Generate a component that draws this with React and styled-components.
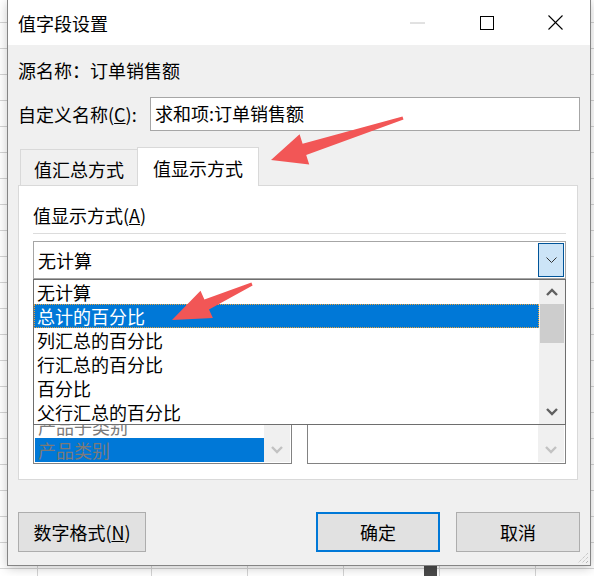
import React from 'react';
import styled, { createGlobalStyle } from 'styled-components';

const FONT = `"Noto Sans CJK SC", "Microsoft YaHei", "Noto Sans", sans-serif`;

const Global = createGlobalStyle`
  html, body { margin: 0; padding: 0; }
  body {
    width: 594px;
    height: 576px;
    overflow: hidden;
    font-family: ${FONT};
    background-color: #ffffff;
    background-image:
      linear-gradient(#4a4a4a, #4a4a4a),
      repeating-linear-gradient(to right, transparent 0, transparent 95px, #d4d4d4 95px, #d4d4d4 96px),
      repeating-linear-gradient(to bottom, transparent 0, transparent 25px, #d4d4d4 25px, #d4d4d4 26px);
    background-size: 13px 20px, 100% 100%, 100% 100%;
    background-position: 424px 566px, 56px 0, 0 -3px;
    background-repeat: no-repeat, repeat, repeat;
  }
`;

const Page = styled.div`
  position: relative;
  width: 594px;
  height: 576px;
  box-sizing: border-box;
  padding-left: 7px;
`;

const Dialog = styled.div`
  position: relative;
  box-sizing: border-box;
  width: 584px;
  height: 566px;
  border: 1px solid #858585;
  border-top: none;
  box-shadow: 0 2px 10px rgba(0, 0, 0, 0.22);
  display: flex;
  flex-direction: column;
  background: #f0f0f0;
  font-family: ${FONT};
  color: #000;
`;

const TitleBar = styled.div`
  flex: none;
  height: 45px;
  background: #fff;
  display: flex;
  align-items: center;
  padding-left: 10px;
`;

const Title = styled.div`
  flex: 1;
  font-size: 18px;
  line-height: 24px;
`;

const WinButton = styled.div`
  width: 69px;
  height: 45px;
  display: flex;
  align-items: center;
  justify-content: center;
`;

const Body = styled.div`
  flex: 1;
  display: flex;
  flex-direction: column;
  padding: 13px 10px 13px 10px;
`;

const TextRow = styled.div`
  font-size: 18px;
  line-height: 24px;
  height: 24px;
  white-space: pre;
`;

const NameRow = styled.div`
  margin-top: 15px;
  display: flex;
  align-items: center;
  height: 34px;
`;

const NameLabel = styled.div`
  width: 132px;
  font-size: 18px;
  line-height: 24px;
  white-space: nowrap;
`;

const NameInput = styled.div`
  flex: 1;
  height: 34px;
  box-sizing: border-box;
  border: 1px solid #a6a6a6;
  background: #fff;
  padding-left: 4px;
  font-size: 18px;
  line-height: 30px;
`;

const TabStrip = styled.div`
  margin-top: 16px;
  height: 38px;
  display: flex;
  align-items: flex-end;
  padding-left: 2px;
  position: relative;
  z-index: 1;
`;

const Tab = styled.div`
  box-sizing: border-box;
  width: ${(p) => (p.$active ? 122 : 117)}px;
  height: ${(p) => (p.$active ? 39 : 36)}px;
  margin-bottom: ${(p) => (p.$active ? -1 : 0)}px;
  background: ${(p) => (p.$active ? '#fff' : '#f0f0f0')};
  border-top: 1px solid #d9d9d9;
  border-left: 1px solid #d9d9d9;
  border-right: ${(p) => (p.$active ? '1px solid #d9d9d9' : 'none')};
  display: flex;
  align-items: center;
  justify-content: center;
  padding-top: 2px;
  font-size: 18px;
  line-height: 24px;
`;

const Panel = styled.div`
  position: relative;
  height: 295px;
  margin-right: 2px;
  box-sizing: border-box;
  border: 1px solid #d9d9d9;
  background: #fff;
  padding: 17px 11px 0 14px;
  display: flex;
  flex-direction: column;
`;

const SectionLabel = styled.div`
  font-size: 18px;
  line-height: 24px;
  height: 24px;
`;

const Separator = styled.div`
  margin-top: 6px;
  height: 1px;
  background: #dcdcdc;
`;

const Combo = styled.div`
  position: relative;
  margin-top: 7px;
  height: 38px;
  box-sizing: border-box;
  border: 1px solid #a6a6a6;
  padding: 1px;
  display: flex;
  align-items: stretch;
`;

const ComboText = styled.div`
  flex: 1;
  padding-left: 3px;
  font-size: 18px;
  line-height: 34px;
`;

const ComboButton = styled.div`
  width: 26px;
  box-sizing: border-box;
  background: #cce4f7;
  border: 1px solid #005499;
  display: flex;
  align-items: center;
  justify-content: center;
`;

const DropList = styled.div`
  position: absolute;
  top: calc(100% + 1px);
  left: -1px;
  right: -1px;
  height: 146px;
  box-sizing: border-box;
  border: 1px solid #6e6e6e;
  background: #fff;
  display: flex;
  z-index: 5;
`;

const Items = styled.div`
  flex: 1;
  display: flex;
  flex-direction: column;
  overflow: hidden;
`;

const Item = styled.div`
  height: 24px;
  flex: none;
  box-sizing: border-box;
  padding-left: 3px;
  font-size: 18px;
  line-height: 24px;
  white-space: nowrap;
  background: ${(p) => (p.$selected ? '#0078d7' : 'transparent')};
  color: ${(p) => (p.$selected ? '#fff' : '#000')};
  outline: ${(p) => (p.$selected ? '1px dotted #e9a23b' : 'none')};
  outline-offset: -1px;
`;

const ScrollBar = styled.div`
  width: 26px;
  flex: none;
  background: #f0f0f0;
  display: flex;
  flex-direction: column;
  margin: ${(p) => p.$margin || '0'};
`;

const ScrollArrow = styled.div`
  height: 24px;
  flex: none;
  display: flex;
  align-items: center;
  justify-content: center;
`;

const Thumb = styled.div`
  height: 39px;
  margin: 0 1px;
  background: #cdcdcd;
`;

const Spacer = styled.div`
  flex: 1;
`;

const Lower = styled.div`
  margin-top: 13px;
  display: grid;
  grid-template-columns: 1fr 1fr;
  column-gap: 15px;
`;

const SmallList = styled.div`
  height: 172px;
  box-sizing: border-box;
  border: 1px solid #828282;
  background: #fff;
  display: flex;
`;

const SmallItems = styled.div`
  flex: 1;
  display: flex;
  flex-direction: column;
  justify-content: flex-end;
  overflow: hidden;
  padding: 1px 0 1px 1px;
`;

const SmallItem = styled.div`
  height: 24px;
  flex: none;
  padding-left: 3px;
  font-size: 18px;
  line-height: 24px;
  color: #7a7a7a;
  background: ${(p) => (p.$selected ? '#0078d7' : 'transparent')};
`;

const ButtonRow = styled.div`
  margin-top: 32px;
  display: flex;
  justify-content: space-between;
`;

const BtnGroup = styled.div`
  display: flex;
  gap: 16px;
`;

const Btn = styled.button`
  width: ${(p) => p.$w}px;
  height: 40px;
  box-sizing: border-box;
  padding: 0;
  background: #e1e1e1;
  border: ${(p) => (p.$default ? '2px solid #0078d7' : '1px solid #adadad')};
  font-family: ${FONT};
  font-size: 18px;
  line-height: 24px;
  color: #000;
`;

const Grip = styled.svg`
  position: absolute;
  right: 1px;
  bottom: 1px;
`;

const Overlay = styled.svg`
  position: absolute;
  left: 0;
  top: 0;
  pointer-events: none;
  z-index: 10;
`;

const ChevUp = ({ color = '#606060' }) => (
  <svg width="12" height="8" viewBox="0 0 12 8">
    <polyline points="1,7 6,2 11,7" fill="none" stroke={color} strokeWidth="2.4" />
  </svg>
);

const ChevDown = ({ color = '#606060' }) => (
  <svg width="12" height="8" viewBox="0 0 12 8">
    <polyline points="1,1 6,6 11,1" fill="none" stroke={color} strokeWidth="2.4" />
  </svg>
);

const options = ['无计算', '总计的百分比', '列汇总的百分比', '行汇总的百分比', '百分比', '父行汇总的百分比'];
const fields = ['产品子类别', '产品类别'];

export default function App() {
  return (
    <>
      <Global />
      <Page>
        <Dialog>
          <TitleBar>
            <Title>值字段设置</Title>
            <WinButton>
              <svg width="15" height="2" viewBox="0 0 15 2">
                <line x1="0" y1="1" x2="15" y2="1" stroke="#c4c4c4" strokeWidth="1" />
              </svg>
            </WinButton>
            <WinButton>
              <svg width="14" height="14" viewBox="0 0 14 14">
                <rect x="0.5" y="0.5" width="13" height="13" fill="none" stroke="#000" strokeWidth="1" />
              </svg>
            </WinButton>
            <WinButton>
              <svg width="15" height="15" viewBox="0 0 15 15">
                <line x1="0.5" y1="0.5" x2="14.5" y2="14.5" stroke="#000" strokeWidth="1.1" />
                <line x1="14.5" y1="0.5" x2="0.5" y2="14.5" stroke="#000" strokeWidth="1.1" />
              </svg>
            </WinButton>
          </TitleBar>
          <Body>
            <TextRow>源名称：订单销售额</TextRow>
            <NameRow>
              <NameLabel>
                自定义名称(<u>C</u>):
              </NameLabel>
              <NameInput>求和项:订单销售额</NameInput>
            </NameRow>
            <TabStrip>
              <Tab>值汇总方式</Tab>
              <Tab $active>值显示方式</Tab>
            </TabStrip>
            <Panel>
              <SectionLabel>
                值显示方式(<u>A</u>)
              </SectionLabel>
              <Separator />
              <Combo>
                <ComboText>无计算</ComboText>
                <ComboButton>
                  <svg width="11" height="7" viewBox="0 0 11 7">
                    <polyline points="0.5,0.5 5.5,5.5 10.5,0.5" fill="none" stroke="#333" strokeWidth="1" />
                  </svg>
                </ComboButton>
                <DropList>
                  <Items>
                    {options.map((o, i) => (
                      <Item key={o} $selected={i === 1}>
                        {o}
                      </Item>
                    ))}
                  </Items>
                  <ScrollBar>
                    <ScrollArrow>
                      <ChevUp />
                    </ScrollArrow>
                    <Thumb />
                    <Spacer />
                    <ScrollArrow>
                      <ChevDown />
                    </ScrollArrow>
                  </ScrollBar>
                </DropList>
              </Combo>
              <Lower>
                <SmallList>
                  <SmallItems>
                    {fields.map((f, i) => (
                      <SmallItem key={f} $selected={i === fields.length - 1}>
                        {f}
                      </SmallItem>
                    ))}
                  </SmallItems>
                  <ScrollBar $margin="1px 1px 1px 0">
                    <Spacer />
                    <ScrollArrow>
                      <ChevDown color="#c2c2c2" />
                    </ScrollArrow>
                  </ScrollBar>
                </SmallList>
                <SmallList>
                  <SmallItems />
                  <ScrollBar $margin="1px 1px 1px 0">
                    <Spacer />
                    <ScrollArrow>
                      <ChevDown color="#c2c2c2" />
                    </ScrollArrow>
                  </ScrollBar>
                </SmallList>
              </Lower>
            </Panel>
            <ButtonRow>
              <Btn $w={128}>
                数字格式(<u>N</u>)
              </Btn>
              <BtnGroup>
                <Btn $w={124} $default>
                  确定
                </Btn>
                <Btn $w={124}>取消</Btn>
              </BtnGroup>
            </ButtonRow>
          </Body>
          <Grip width="14" height="14" viewBox="0 0 14 14">
            <line x1="13" y1="3" x2="3" y2="13" stroke="#b5b5b5" strokeWidth="1" strokeDasharray="1 1" />
            <line x1="13" y1="7" x2="7" y2="13" stroke="#b5b5b5" strokeWidth="1" strokeDasharray="1 1" />
            <line x1="13" y1="11" x2="11" y2="13" stroke="#b5b5b5" strokeWidth="1" />
          </Grip>
        </Dialog>
        <Overlay width="594" height="576" viewBox="0 0 594 576">
          <polygon
            points="271,160 299.6,134.2 302.6,143.7 402.5,116.6 403.5,119.4 306.2,155.1 309.2,164.6"
            fill="#f25656"
          />
          <polygon
            points="172,320 200.5,290.7 204.4,299.4 251.4,282.6 252.6,285.4 209,309.4 212.9,318.1"
            fill="#f25656"
          />
        </Overlay>
      </Page>
    </>
  );
}
